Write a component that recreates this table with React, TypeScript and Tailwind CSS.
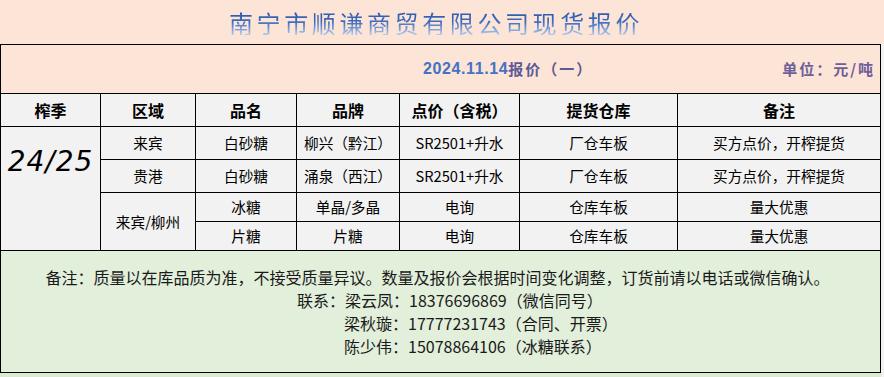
const rows = [
  { area: '来宾', name: '白砂糖', brand: '柳兴（黔江）', price: 'SR2501+升水', store: '厂仓车板', note: '买方点价，开榨提货' },
  { area: '贵港', name: '白砂糖', brand: '涌泉（西江）', price: 'SR2501+升水', store: '厂仓车板', note: '买方点价，开榨提货' },
];

const headers = ['榨季', '区域', '品名', '品牌', '点价（含税）', '提货仓库', '备注'];

export default function App() {
  const cell = 'border border-black text-center p-0';

  return (
    <div className="w-[884px] h-[377px] overflow-hidden bg-[#f2f2f2] font-['Noto_Sans_CJK_SC',sans-serif] text-black">
      {/* Title */}
      <div className="h-[44px] bg-[#fce4d6] flex items-center justify-center pr-[12px]">
        <h1 className="text-[24px] font-normal tracking-[3.6px] leading-none pt-[2px] bg-gradient-to-b from-[#2753a6] via-[#3f6cc0] to-[#b4caee] bg-clip-text text-transparent">
          南宁市顺谦商贸有限公司现货报价
        </h1>
      </div>

      <table className="w-[881px] table-fixed border-collapse">
        <colgroup>
          <col className="w-[100px]" />
          <col className="w-[95px]" />
          <col className="w-[101px]" />
          <col className="w-[103px]" />
          <col className="w-[120px]" />
          <col className="w-[158px]" />
          <col className="w-[203px]" />
        </colgroup>
        <tbody>
          {/* Subtitle */}
          <tr className="h-[49px] bg-[#fce4d6]">
            <td colSpan={7} className="border border-black p-0">
              <div className="flex items-center justify-between pl-[422px] pr-[5px] text-[15px] font-bold">
                <span className="flex items-center">
                  <span className="text-[#4472c4] font-['Liberation_Sans',sans-serif] text-[16px] tracking-[0.6px]">2024.11.14</span>
                  <span className="text-[#5f5a96] tracking-[2px]">报价（一）</span>
                </span>
                <span className="text-[#6d5f9a] text-[15px] tracking-[2px]">单位：元/吨</span>
              </div>
            </td>
          </tr>

          {/* Header */}
          <tr className="h-[33px]">
            {headers.map((h) => (
              <td key={h} className={`${cell} text-[16px] font-bold`}>
                {h}
              </td>
            ))}
          </tr>

          {/* Body */}
          {rows.map((r, i) => (
            <tr key={r.area} className="h-[33px] text-[14.67px]">
              {i === 0 && (
                <td rowSpan={4} className="border border-black p-0 align-top">
                  <div className="pt-[14px] text-center text-[28px] italic tracking-[1px] font-['DejaVu_Sans',sans-serif]">
                    24/25
                  </div>
                </td>
              )}
              <td className={cell}>{r.area}</td>
              <td className={cell}>{r.name}</td>
              <td className={cell}>{r.brand}</td>
              <td className={cell}>{r.price}</td>
              <td className={cell}>{r.store}</td>
              <td className={cell}>{r.note}</td>
            </tr>
          ))}
          <tr className="h-[29px] text-[14.67px]">
            <td rowSpan={2} className={cell}>来宾/柳州</td>
            <td className={cell}>冰糖</td>
            <td className={cell}>单晶/多晶</td>
            <td className={cell}>电询</td>
            <td className={cell}>仓库车板</td>
            <td className={cell}>量大优惠</td>
          </tr>
          <tr className="h-[29px] text-[14.67px]">
            <td className={cell}>片糖</td>
            <td className={cell}>片糖</td>
            <td className={cell}>电询</td>
            <td className={cell}>仓库车板</td>
            <td className={cell}>量大优惠</td>
          </tr>

          {/* Notes */}
          <tr className="h-[122px] bg-[#e2efda]">
            <td colSpan={7} className="border border-black p-0 align-top">
              <div className="pt-[15px] text-[16px] leading-[23px] text-[#1a1a1a]">
                <div className="text-center pr-[6px]">
                  备注：质量以在库品质为准，不接受质量异议。数量及报价会根据时间变化调整，订货前请以电话或微信确认。
                </div>
                <div className="pl-[296px]">联系：梁云凤：18376696869（微信同号）</div>
                <div className="pl-[343px]">梁秋璇：17777231743（合同、开票）</div>
                <div className="pl-[343px]">陈少伟：15078864106（冰糖联系）</div>
              </div>
            </td>
          </tr>
        </tbody>
      </table>
      <div className="h-[10px] w-[881px] bg-[#d9ecd1]" />
    </div>
  );
}
